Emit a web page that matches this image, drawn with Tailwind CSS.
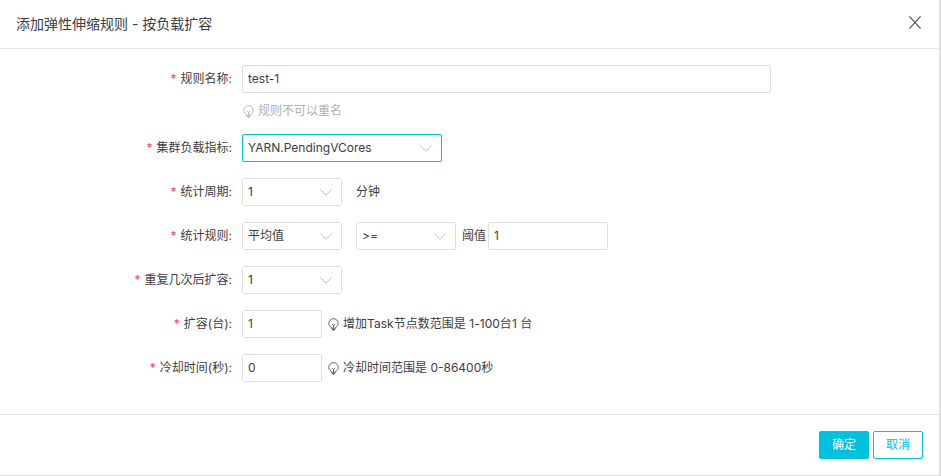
<!DOCTYPE html>
<html lang="zh-CN">
<head>
  <meta charset="UTF-8" />
  <title>添加弹性伸缩规则</title>
  <script src="https://cdn.jsdelivr.net/npm/@tailwindcss/browser@4"></script>
</head>
<body class="bg-white">
  <div class="w-[941px] h-[476px] overflow-hidden flex flex-col border-r-2 border-b border-[#dedee3] text-[12px] leading-[18px] text-[#3d3d42] font-['Inter','Noto_Sans_CJK_SC',sans-serif]">
    <!-- header -->
    <div class="h-[49px] shrink-0 flex items-center justify-between pl-4 pr-[18px] border-b border-[#e3e3ea]">
      <h1 class="text-[14px] font-normal">添加弹性伸缩规则 - 按负载扩容</h1>
      <svg class="w-[12px] h-[13px] -mt-[3px]" viewBox="0 0 12 13" fill="none" stroke="#4a4a55" stroke-width="1.1"><path d="M.4 .4l11.2 12.2M11.6 .4L.4 12.6" /></svg>
    </div>

    <!-- form -->
    <div class="pt-4 pb-8 flex flex-col gap-4 h-[366px] shrink-0 border-b border-[#e3e3ea]">
      <div>
        <div class="flex items-center">
          <label class="w-[232px] mr-[10px] text-right"><span class="text-[#f5426c] mr-1">*</span>规则名称:</label>
          <div class="w-[529px] h-[28px] px-[5px] flex items-center border border-[#dedee3] rounded-[2px]">test-1</div>
        </div>
        <div class="ml-[242px] mt-[11px] h-[14px] flex items-center gap-[3px] text-[#b0b0b5]">
          <svg class="w-[13px] h-[13px]" viewBox="0 0 13 13" fill="none" stroke="currentColor" stroke-width=".9"><path d="M4.3 9.2C2.7 8.4 1.8 7 1.8 5.4a4.7 4.7 0 019.4 0c0 1.6-.9 3-2.5 3.8v1.1H4.3zM5 6.2l1.5 1.3L8 6.2M6.5 7.5v2.6M4.8 11.5h3.4M5.7 12.6h1.6" /></svg>
          <span>规则不可以重名</span>
        </div>
      </div>

      <div class="flex items-center">
        <label class="w-[232px] mr-[10px] text-right"><span class="text-[#f5426c] mr-1">*</span>集群负载指标:</label>
        <div class="w-[200px] h-[28px] pl-[5px] pr-[9px] flex items-center justify-between border border-[#00c1de] rounded-[2px]">
          <span>YARN.PendingVCores</span>
          <svg class="w-[12px] h-[7px]" viewBox="0 0 12 7" fill="none" stroke="#c4c4c8"><path d="M.5.5L6 6.2 11.5.5" /></svg>
        </div>
      </div>

      <div class="flex items-center">
        <label class="w-[232px] mr-[10px] text-right"><span class="text-[#f5426c] mr-1">*</span>统计周期:</label>
        <div class="w-[100px] h-[28px] pl-[5px] pr-[9px] flex items-center justify-between border border-[#dedee3] rounded-[2px]">
          <span>1</span>
          <svg class="w-[12px] h-[7px]" viewBox="0 0 12 7" fill="none" stroke="#c4c4c8"><path d="M.5.5L6 6.2 11.5.5" /></svg>
        </div>
        <span class="ml-[14px]">分钟</span>
      </div>

      <div class="flex items-center">
        <label class="w-[232px] mr-[10px] text-right"><span class="text-[#f5426c] mr-1">*</span>统计规则:</label>
        <div class="w-[100px] h-[28px] pl-[5px] pr-[9px] flex items-center justify-between border border-[#dedee3] rounded-[2px]">
          <span>平均值</span>
          <svg class="w-[12px] h-[7px]" viewBox="0 0 12 7" fill="none" stroke="#c4c4c8"><path d="M.5.5L6 6.2 11.5.5" /></svg>
        </div>
        <div class="ml-[14px] w-[100px] h-[28px] pl-[5px] pr-[9px] flex items-center justify-between border border-[#dedee3] rounded-[2px]">
          <span>&gt;=</span>
          <svg class="w-[12px] h-[7px]" viewBox="0 0 12 7" fill="none" stroke="#c4c4c8"><path d="M.5.5L6 6.2 11.5.5" /></svg>
        </div>
        <span class="ml-[6px]">阈值</span>
        <div class="ml-[2px] w-[120px] h-[28px] px-[5px] flex items-center border border-[#dedee3] rounded-[2px]">1</div>
      </div>

      <div class="flex items-center">
        <label class="w-[232px] mr-[10px] text-right"><span class="text-[#f5426c] mr-1">*</span>重复几次后扩容:</label>
        <div class="w-[100px] h-[28px] pl-[5px] pr-[9px] flex items-center justify-between border border-[#dedee3] rounded-[2px]">
          <span>1</span>
          <svg class="w-[12px] h-[7px]" viewBox="0 0 12 7" fill="none" stroke="#c4c4c8"><path d="M.5.5L6 6.2 11.5.5" /></svg>
        </div>
      </div>

      <div class="flex items-center">
        <label class="w-[232px] mr-[10px] text-right"><span class="text-[#f5426c] mr-1">*</span>扩容(台):</label>
        <div class="w-[80px] h-[28px] px-[5px] flex items-center border border-[#dedee3] rounded-[2px]">1</div>
        <div class="ml-[5px] flex items-center gap-[3px]">
          <svg class="w-[13px] h-[13px]" viewBox="0 0 13 13" fill="none" stroke="#555" stroke-width=".9"><path d="M4.3 9.2C2.7 8.4 1.8 7 1.8 5.4a4.7 4.7 0 019.4 0c0 1.6-.9 3-2.5 3.8v1.1H4.3zM5 6.2l1.5 1.3L8 6.2M6.5 7.5v2.6M4.8 11.5h3.4M5.7 12.6h1.6" /></svg>
          <span class="tracking-[0.03px]">增加Task节点数范围是 1-100台1 台</span>
        </div>
      </div>

      <div class="flex items-center">
        <label class="w-[232px] mr-[10px] text-right"><span class="text-[#f5426c] mr-1">*</span>冷却时间(秒):</label>
        <div class="w-[80px] h-[28px] px-[5px] flex items-center border border-[#dedee3] rounded-[2px]">0</div>
        <div class="ml-[5px] flex items-center gap-[3px]">
          <svg class="w-[13px] h-[13px]" viewBox="0 0 13 13" fill="none" stroke="#555" stroke-width=".9"><path d="M4.3 9.2C2.7 8.4 1.8 7 1.8 5.4a4.7 4.7 0 019.4 0c0 1.6-.9 3-2.5 3.8v1.1H4.3zM5 6.2l1.5 1.3L8 6.2M6.5 7.5v2.6M4.8 11.5h3.4M5.7 12.6h1.6" /></svg>
          <span>冷却时间范围是 0-86400秒</span>
        </div>
      </div>
    </div>

    <!-- footer -->
    <div class="flex-1 flex items-start justify-end gap-1 pt-4 pr-[16px]">
      <button class="w-[50px] h-[28px] bg-[#00c1de] text-white rounded-[2px]">确定</button>
      <button class="w-[50px] h-[28px] border border-[#00c1de] text-[#00c1de] rounded-[2px]">取消</button>
    </div>
  </div>
</body>
</html>
